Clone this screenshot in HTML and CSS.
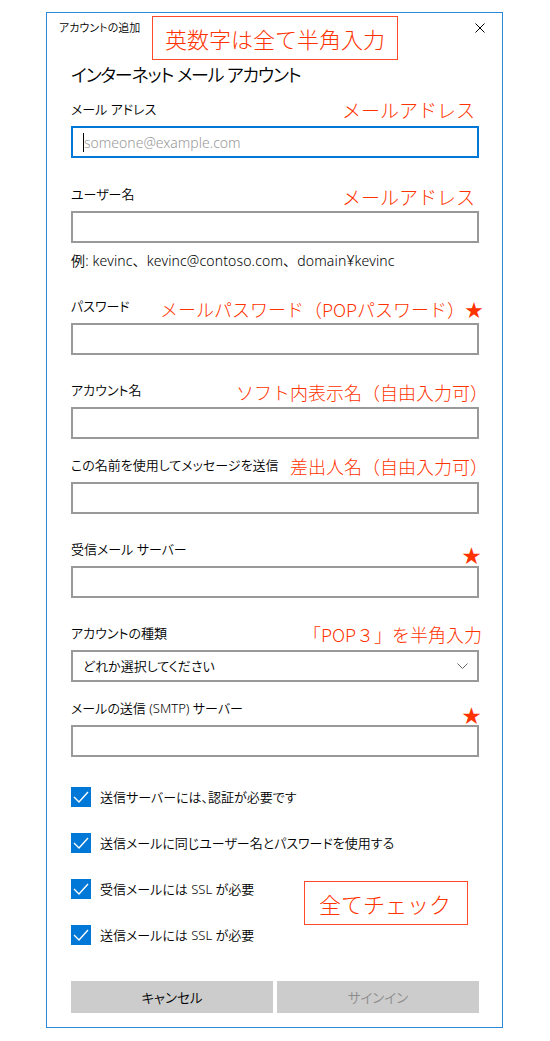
FILE: index.html
```html
<!DOCTYPE html>
<html lang="ja">
<head>
<meta charset="utf-8">
<title>アカウントの追加</title>
<link rel="stylesheet" href="styles.css">
</head>
<body>
<div class="window">
  <div class="titlebar">
    <div class="title">アカウントの追加</div>
    <div class="callout callout-top">英数字は全て半角入力</div>
    <svg class="close" viewBox="0 0 10 10" aria-label="閉じる"><path d="M0.5 0.5 L9.5 9.5 M9.5 0.5 L0.5 9.5" stroke="#000" stroke-width="1" fill="none"/></svg>
  </div>
  <div class="content">
    <h1 class="heading">インターネット メール アカウント</h1>

    <div class="field field-first">
      <div class="label-row"><span class="label">メール アドレス</span><span class="note note-mail">メールアドレス</span></div>
      <div class="box box-focus"><span class="caret"></span><span class="placeholder">someone@example.com</span></div>
    </div>

    <div class="field field-user">
      <div class="label-row"><span class="label">ユーザー名</span><span class="note note-user">メールアドレス</span></div>
      <div class="box"></div>
    </div>
    <p class="hint">例: kevinc、kevinc@contoso.com、domain¥kevinc</p>

    <div class="field">
      <div class="label-row"><span class="label">パスワード</span><span class="note note-pass">メールパスワード（POPパスワード）★</span></div>
      <div class="box"></div>
    </div>

    <div class="field">
      <div class="label-row"><span class="label">アカウント名</span><span class="note note-acct">ソフト内表示名（自由入力可）</span></div>
      <div class="box"></div>
    </div>

    <div class="field field-tight">
      <div class="label-row"><span class="label">この名前を使用してメッセージを送信</span><span class="note note-sender">差出人名（自由入力可）</span></div>
      <div class="box"></div>
    </div>

    <div class="field">
      <div class="label-row"><span class="label">受信メール サーバー</span><span class="note star">★</span></div>
      <div class="box"></div>
    </div>

    <div class="field">
      <div class="label-row"><span class="label">アカウントの種類</span><span class="note note-type">「POP３」を半角入力</span></div>
      <div class="box select"><span class="select-text">どれか選択してください</span><svg class="chevron" viewBox="0 0 11 7"><polyline points="0.5,0.5 5.5,5.5 10.5,0.5" stroke="#666" stroke-width="1" fill="none"/></svg></div>
    </div>

    <div class="field field-tight">
      <div class="label-row"><span class="label">メールの送信 (SMTP) サーバー</span><span class="note star star-smtp">★</span></div>
      <div class="box"></div>
    </div>

    <div class="checks">
      <div class="check"><span class="checkbox"><svg viewBox="0 0 20 20"><polyline points="3,10 8,15 17,5" stroke="#fff" stroke-width="1.4" fill="none"/></svg></span><span class="check-label">送信サーバーには、認証が必要です</span></div>
      <div class="check"><span class="checkbox"><svg viewBox="0 0 20 20"><polyline points="3,10 8,15 17,5" stroke="#fff" stroke-width="1.4" fill="none"/></svg></span><span class="check-label">送信メールに同じユーザー名とパスワードを使用する</span></div>
      <div class="check"><span class="checkbox"><svg viewBox="0 0 20 20"><polyline points="3,10 8,15 17,5" stroke="#fff" stroke-width="1.4" fill="none"/></svg></span><span class="check-label">受信メールには SSL が必要</span></div>
      <div class="check"><span class="checkbox"><svg viewBox="0 0 20 20"><polyline points="3,10 8,15 17,5" stroke="#fff" stroke-width="1.4" fill="none"/></svg></span><span class="check-label">送信メールには SSL が必要</span></div>
      <div class="callout callout-check">全てチェック</div>
    </div>

    <div class="buttons">
      <div class="btn">キャンセル</div>
      <div class="btn btn-disabled">サインイン</div>
    </div>
  </div>
</div>
</body>
</html>
```

FILE: styles.css
```css
* { box-sizing: border-box; }

body {
  margin: 0;
  background: #fff;
  color: #000;
  font-family: "Noto Sans", "Noto Sans CJK JP", sans-serif;
  font-feature-settings: "palt";
  font-weight: 350;
}

.window {
  margin: 12px 0 0 46px;
  width: 457px;
  border: 1px solid #2b88d8;
}

.titlebar {
  display: flex;
  align-items: flex-start;
  padding-left: 12px;
  height: 47px;
}

.title {
  flex: none;
  width: 93px;
  margin-top: 7px;
  font-size: 11px;
  line-height: 16px;
  white-space: nowrap;
}

.callout {
  border: 1px solid #ff4a2a;
  color: #ff3300;
  font-family: "Noto Sans CJK JP", sans-serif;
  font-feature-settings: normal;
  font-weight: 300;
  display: flex;
  align-items: center;
  white-space: nowrap;
}

.callout-top {
  flex: none;
  margin-top: 3px;
  width: 246px;
  height: 44px;
  padding-left: 12px;
  font-size: 22px;
}

.close {
  flex: none;
  margin-left: auto;
  margin-right: 17px;
  margin-top: 10px;
  width: 10px;
  height: 10px;
}

.content {
  padding: 0 23px 14px 24px;
}

.heading {
  margin: 1px 0 0;
  font-weight: 350;
  font-size: 18px;
  letter-spacing: -1.2px;
  line-height: 28px;
  white-space: nowrap;
}

.field { margin-top: 25px; }
.field-first { margin-top: 10px; }
.field-user { margin-top: 26px; }
.field-tight { margin-top: 16px; }

.label-row {
  display: flex;
  justify-content: space-between;
  align-items: flex-start;
  height: 20px;
  margin-bottom: 7px;
}

.label {
  font-size: 13px;
  line-height: 20px;
  white-space: nowrap;
}

.note {
  color: #ff3300;
  font-family: "Noto Sans CJK JP", sans-serif;
  font-feature-settings: normal;
  font-weight: 300;
  line-height: 20px;
  white-space: nowrap;
}

.note-mail { font-size: 19px; margin-top: 1px; margin-right: 4px; }
.note-user { font-size: 19px; margin-top: 3px; margin-right: 4px; }
.note-pass { font-size: 18px; margin-top: 3px; margin-right: -4px; }
.note-acct { font-size: 18px; margin-top: 2px; margin-right: -9px; }
.note-sender { font-size: 18px; margin-top: 1px; margin-right: -9px; }
.note-type { font-size: 18px; margin-top: 1px; margin-right: -3px; }
.star { font-size: 19px; margin-top: 6px; margin-right: -2px; }
.star-smtp { margin-top: 7px; }

.box {
  height: 32px;
  border: 2px solid #999;
  display: flex;
  align-items: center;
  padding: 0 10px;
}

.box-focus { border-color: #0078d7; }

.caret {
  width: 1px;
  height: 19px;
  background: #000;
}

.placeholder {
  font-size: 14px;
  font-weight: 300;
  color: #999;
  white-space: nowrap;
}

.hint {
  margin: 8px 0 0;
  font-size: 14px;
  letter-spacing: 0.15px;
  line-height: 20px;
  font-feature-settings: normal;
  white-space: nowrap;
}

.select {
  justify-content: space-between;
  padding-right: 9px;
}

.select-text {
  font-size: 13px;
  line-height: 20px;
}

.chevron {
  width: 11px;
  height: 7px;
}

.checks {
  position: relative;
  margin-top: 30px;
  display: flex;
  flex-direction: column;
  gap: 26px;
}

.check {
  display: flex;
  align-items: center;
  height: 20px;
  gap: 9px;
}

.checkbox {
  flex: none;
  width: 20px;
  height: 20px;
  background: #0078d7;
}

.checkbox svg {
  display: block;
  width: 20px;
  height: 20px;
}

.check-label {
  font-size: 13px;
  line-height: 20px;
  white-space: nowrap;
}

.callout-check {
  position: absolute;
  left: 233px;
  top: 94px;
  width: 164px;
  height: 44px;
  padding-left: 14px;
  font-size: 22px;
  background: #fff;
}

.buttons {
  margin-top: 36px;
  display: grid;
  grid-template-columns: 1fr 1fr;
  gap: 4px;
}

.btn {
  height: 32px;
  background: #ccc;
  display: flex;
  align-items: center;
  justify-content: center;
  font-size: 13.5px;
  color: #000;
}

.btn-disabled { color: #8c8c8c; }
```
